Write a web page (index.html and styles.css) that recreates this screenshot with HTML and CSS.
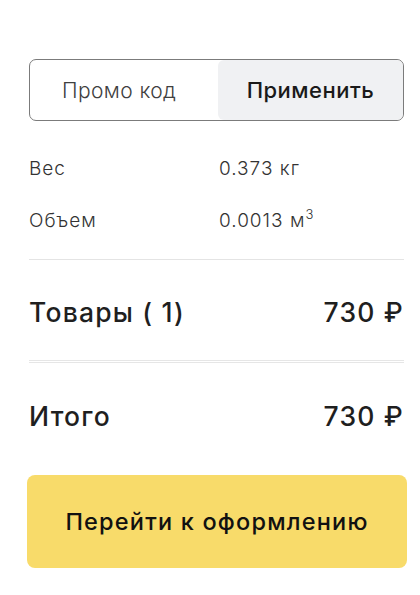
FILE: index.html
```html
<!DOCTYPE html>
<html lang="ru">
<head>
<meta charset="utf-8">
<link rel="stylesheet" href="styles.css">
</head>
<body>
<div class="page">
  <div class="promo">
    <div class="promo-input">Промо код</div>
    <div class="promo-btn">Применить</div>
  </div>
  <div class="specs">
    <div class="spec-label">Вес</div><div class="spec-value">0.373 кг</div>
    <div class="spec-label">Объем</div><div class="spec-value">0.0013 м<sup>3</sup></div>
  </div>
  <div class="line"></div>
  <div class="row row-goods"><span>Товары ( 1)</span><span>730 ₽</span></div>
  <div class="line-double"></div>
  <div class="row row-total"><span>Итого</span><span>730 ₽</span></div>
  <div class="checkout">Перейти к оформлению</div>
</div>
</body>
</html>
```

FILE: styles.css
```css
* { box-sizing: border-box; }
html, body { margin: 0; background: #fff; }
body { font-family: Inter, "Noto Sans", sans-serif; color: #1e1e1e; }
.page { padding: 59px 16px 0 29px; }
.promo {
  display: flex;
  height: 62px;
  border: 1px solid #7b7b7b;
  border-radius: 7px;
  overflow: hidden;
}
.promo-input {
  flex: 1;
  display: flex;
  align-items: center;
  padding-left: 32px;
  font-size: 21px;
  font-weight: 300;
  letter-spacing: 0.4px;
  color: #404040;
}
.promo-btn {
  width: 185px;
  display: flex;
  align-items: center;
  justify-content: center;
  background: #f0f1f3;
  border-radius: 6px;
  font-size: 22px;
  font-weight: 500;
  letter-spacing: 0.5px;
  color: #1a1a1a;
}
.specs {
  display: grid;
  grid-template-columns: 190px 1fr;
  grid-auto-rows: 52px;
  align-items: center;
  margin-top: 21px;
  font-size: 19px;
  font-weight: 300;
  letter-spacing: 1px;
  color: #333;
}
.spec-value sup { font-size: 13px; vertical-align: 8px; line-height: 0; }
.line { margin-top: 13px; height: 1px; background: #e4e4e4; }
.line-double { height: 3px; border-top: 1px solid #e6e6e6; border-bottom: 1px solid #e6e6e6; }
.row {
  display: flex;
  justify-content: space-between;
  align-items: center;
  font-size: 26.5px;
  font-weight: 500;
  letter-spacing: 1.2px;
  color: #1f1f1f;
}
.row-goods { height: 100px; padding-top: 3px; }
.row-total { height: 106px; }
.checkout {
  margin: 6px -3px 0 -2px;
  height: 93px;
  border-radius: 8px;
  background: #f8db6a;
  display: flex;
  align-items: center;
  justify-content: center;
  font-size: 23.5px;
  font-weight: 500;
  letter-spacing: 1.2px;
  color: #111;
}
```
